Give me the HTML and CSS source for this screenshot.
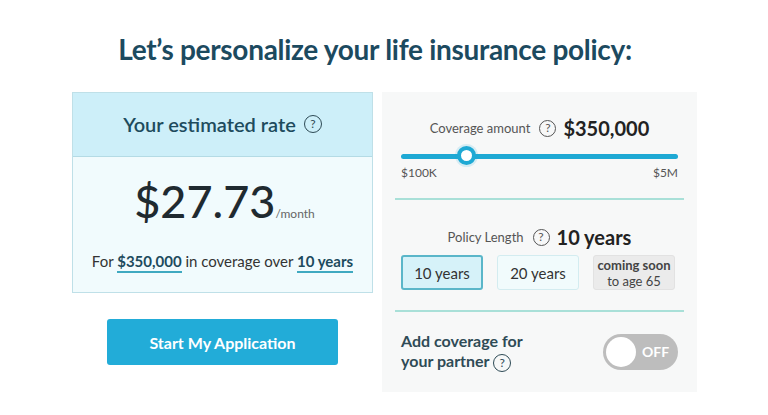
FILE: index.html
```html
<!DOCTYPE html>
<html>
<head>
	<title>Personalize your policy</title>
	<link rel="stylesheet" href="styles.css">
</head>
<body>
	<h1 class="title">Let’s personalize your life insurance policy:</h1>

	<div class="quote">
		<div class="left-col">
			<div class="rate-card">
				<div class="rate-head">
					Your estimated rate
					<span class="help big">?</span>
				</div>
				<div class="rate-body">
					<div class="price">$27.73<span>/month</span></div>
					<div class="summary">For <a href="#">$350,000</a> in coverage over <a href="#">10 years</a></div>
				</div>
			</div>
			<button class="start-btn">Start My Application</button>
		</div>

		<div class="options">
			<div class="section">
				<div class="label-row">
					<span class="label">Coverage amount</span>
					<span class="help">?</span>
					<span class="value">$350,000</span>
				</div>
				<div class="slider">
					<div class="track"></div>
					<div class="thumb"></div>
				</div>
				<div class="range">
					<span>$100K</span>
					<span>$5M</span>
				</div>
			</div>

			<div class="section">
				<div class="label-row">
					<span class="label">Policy Length</span>
					<span class="help">?</span>
					<span class="value">10 years</span>
				</div>
				<div class="lengths">
					<button class="len selected">10 years</button>
					<button class="len">20 years</button>
					<button class="len soon"><b>coming soon</b>to age 65</button>
				</div>
			</div>

			<div class="partner">
				<div class="partner-text">Add coverage for<br>your partner <span class="help big">?</span></div>
				<div class="toggle">
					<div class="knob"></div>
					<span>OFF</span>
				</div>
			</div>
		</div>
	</div>
</body>
</html>
```

FILE: styles.css
```css
body{
	margin: 0;
	font-family: Lato, "Open Sans", sans-serif;
	background: white;
	color: #222;
	width: 768px;
	height: 415px;
}
.title{
	margin: 0;
	padding-top: 34px;
	padding-right: 18px;
	height: 92px;
	box-sizing: border-box;
	text-align: center;
	font-size: 28px;
	letter-spacing: -0.3px;
	font-weight: bold;
	color: #1c4a5f;
	line-height: 30px;
}
.quote{
	display: flex;
	width: 625px;
	margin-left: 72px;
	gap: 9px;
}
.left-col{
	width: 301px;
	display: flex;
	flex-direction: column;
	align-items: center;
}
.rate-card{
	width: 100%;
	border: 1px solid #bfe0e8;
	box-sizing: border-box;
	height: 201px;
	background: #f1fbfd;
}
.rate-head{
	height: 64px;
	background: #cdeff9;
	border-bottom: 1px solid #b4dbe5;
	display: flex;
	align-items: center;
	justify-content: center;
	gap: 8px;
	font-size: 20px;
	font-weight: 600;
	color: #1d4b5d;
	padding-bottom: 2px;
	box-sizing: border-box;
}
.help{
	display: inline-flex;
	align-items: center;
	justify-content: center;
	width: 15px;
	height: 15px;
	border: 1px solid #555;
	border-radius: 50%;
	font-size: 12px;
	font-weight: normal;
	color: #555;
	line-height: 1;
}
.help.big{
	width: 16px;
	height: 16px;
	font-size: 12px;
	color: #2d4a55;
	border-color: #2d4a55;
}
.rate-body{
	text-align: center;
	padding-top: 17px;
}
.price{
	font-size: 45px;
	font-weight: 500;
	color: #1f2a30;
	line-height: 54px;
	padding-left: 4px;
}
.price span{
	font-size: 12px;
	font-weight: normal;
	color: #666;
}
.summary{
	margin-top: 11px;
	font-size: 15px;
	color: #333;
}
.summary a{
	color: #1d4b5d;
	font-weight: bold;
	text-decoration: none;
	border-bottom: 2px solid #3fa9c0;
	padding-bottom: 1px;
}
.start-btn{
	margin-top: 26px;
	width: 231px;
	height: 46px;
	border: none;
	border-radius: 3px;
	background: #22acd8;
	color: white;
	font-family: Lato, sans-serif;
	font-size: 16px;
	font-weight: bold;
}
.options{
	width: 315px;
	height: 300px;
	background: #f7f8f8;
	padding: 0 13px;
	box-sizing: border-box;
}
.section{
	border-bottom: 2px solid #a9e0d8;
	padding: 0 6px;
}
.section:first-child{
	height: 108px;
	padding-top: 25px;
	box-sizing: border-box;
}
.section:nth-child(2){
	height: 112px;
	padding-top: 26px;
	box-sizing: border-box;
}
.label-row{
	display: flex;
	align-items: center;
	justify-content: center;
	gap: 7px;
	height: 22px;
}
.label{
	font-size: 13px;
	color: #555;
	margin-right: 2px;
}
.value{
	font-size: 20px;
	font-weight: bold;
	color: #222;
}
.slider{
	position: relative;
	height: 20px;
	margin-top: 7px;
}
.track{
	position: absolute;
	left: 0;
	right: 0;
	top: 8px;
	height: 5px;
	border-radius: 3px;
	background: #1ea9d4;
}
.thumb{
	position: absolute;
	left: 56px;
	top: 0;
	width: 11px;
	height: 11px;
	border: 4px solid #1ea9d4;
	border-radius: 50%;
	background: white;
	box-shadow: 0 0 0 2px rgba(30,169,212,0.15);
}
.range{
	display: flex;
	justify-content: space-between;
	font-size: 12px;
	color: #555;
	margin-top: -1px;
}
.lengths{
	display: flex;
	gap: 14px;
	margin-top: 7px;
}
.len{
	width: 82px;
	height: 35px;
	border: 1px solid #d3ecf0;
	border-radius: 3px;
	background: #f1fbfc;
	font-family: Lato, sans-serif;
	font-size: 15px;
	color: #333;
	padding: 0;
}
.len.selected{
	border: 2px solid #5ab6c9;
	background: #d6f2f9;
}
.len.soon{
	border: 1px solid #e2e2e2;
	background: #ebebeb;
	font-size: 13px;
	line-height: 16px;
	color: #444;
}
.len.soon b{
	display: block;
}
.partner{
	display: flex;
	justify-content: space-between;
	align-items: center;
	padding: 19px 6px 0;
}
.partner-text{
	font-size: 16px;
	font-weight: bold;
	color: #2f4b56;
	line-height: 20px;
}
.toggle{
	width: 75px;
	height: 36px;
	border-radius: 18px;
	background: #bdbdbd;
	display: flex;
	align-items: center;
	box-sizing: border-box;
	padding: 3px;
	gap: 6px;
}
.knob{
	width: 30px;
	height: 30px;
	border-radius: 50%;
	background: white;
}
.toggle span{
	color: white;
	font-weight: bold;
	font-size: 14px;
}
```
